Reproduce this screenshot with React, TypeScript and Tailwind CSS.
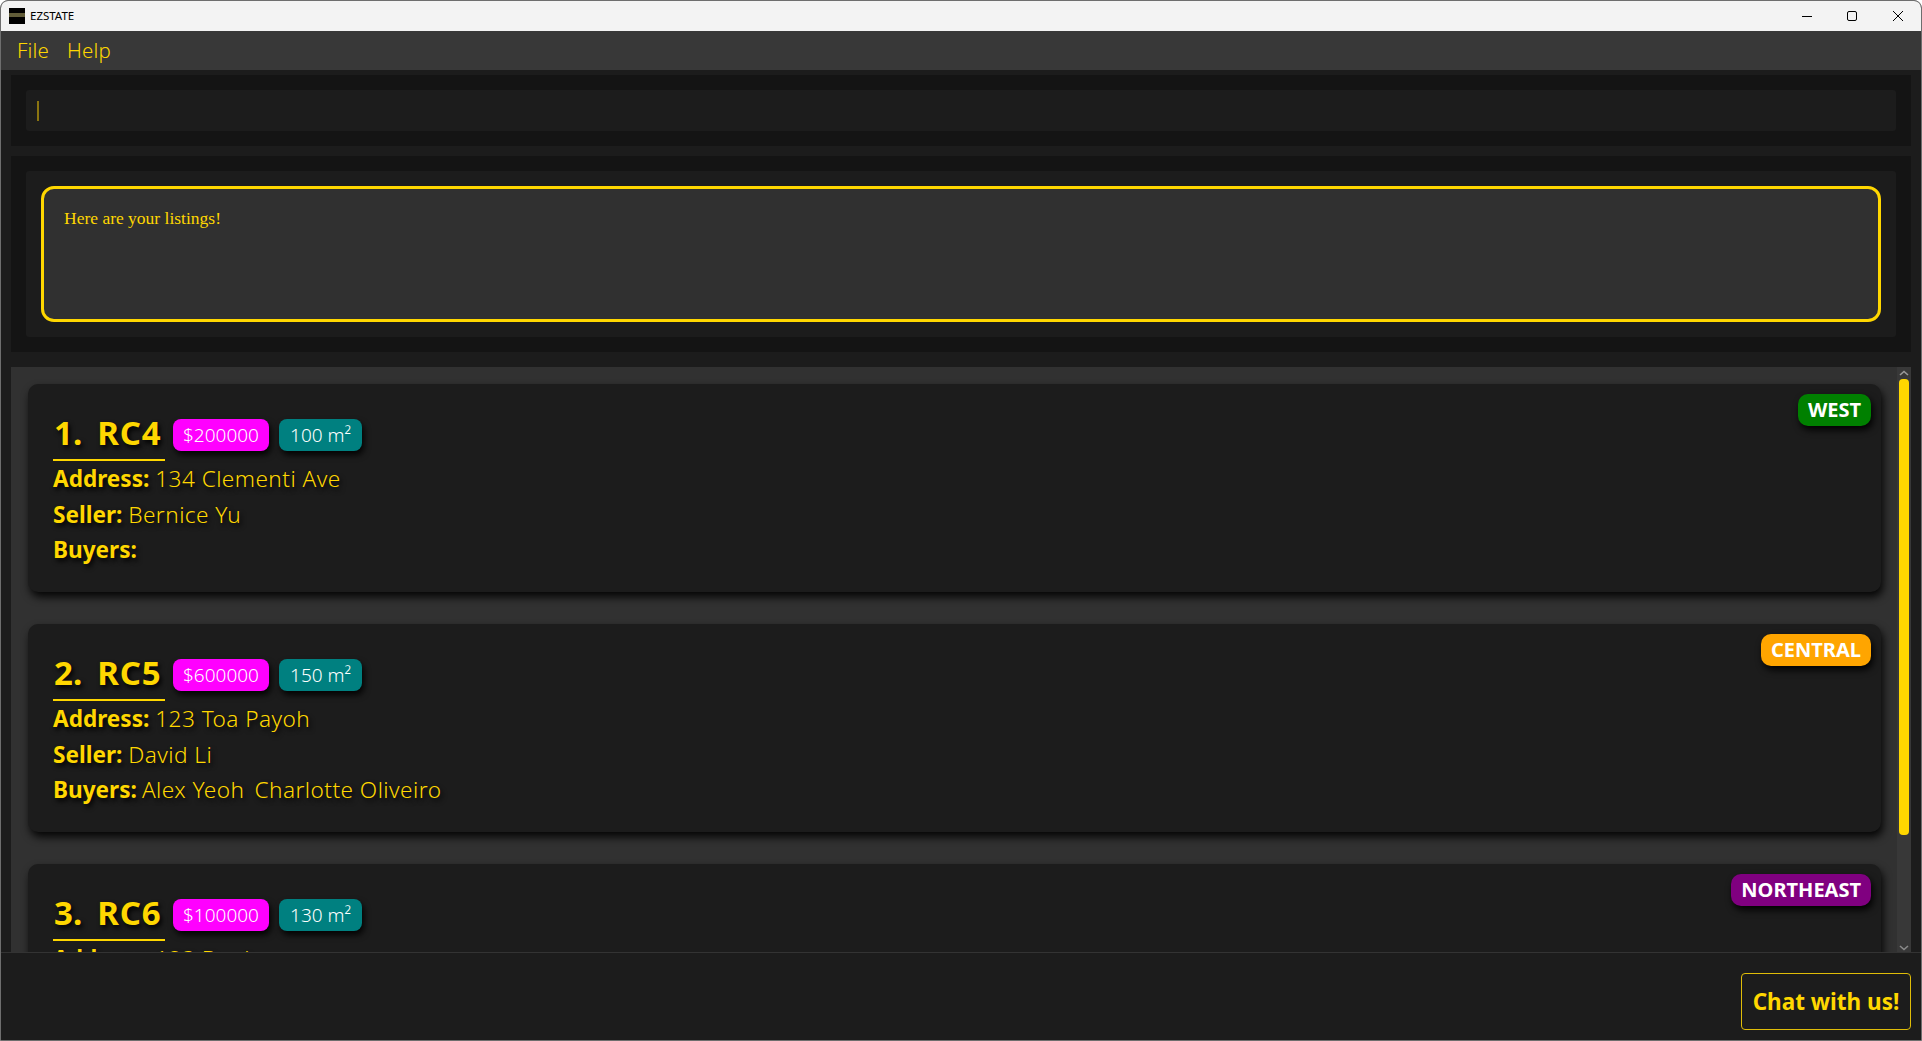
import React from "react";

type Listing = {
    index: number;
    name: string;
    price: string;
    size: string;
    address: string;
    seller: string;
    buyers: string[];
    region: string;
    regionClass: string;
};

const listings: Listing[] = [
    { index: 1, name: "RC4", price: "$200000", size: "100 m²", address: "134 Clementi Ave", seller: "Bernice Yu", buyers: [], region: "WEST", regionClass: "bg-[#008000]" },
    { index: 2, name: "RC5", price: "$600000", size: "150 m²", address: "123 Toa Payoh", seller: "David Li", buyers: ["Alex Yeoh", "Charlotte Oliveiro"], region: "CENTRAL", regionClass: "bg-[#ffa500]" },
    { index: 3, name: "RC6", price: "$100000", size: "130 m²", address: "123 Bugis", seller: "Irfan Ibrahim", buyers: [], region: "NORTHEAST", regionClass: "bg-[#800080]" },
];

const glow = "[text-shadow:2px_3px_5px_#000]";

function TitleBar() {
    return (
        <div className="flex h-[30px] shrink-0 items-center bg-[#f3f3f3] pl-[8px] text-black">
            <svg width="16" height="16" viewBox="0 0 16 16" className="shrink-0">
                <rect width="16" height="16" fill="#000" />
                <rect x="0" y="5" width="16" height="4" fill="#8a8350" />
                <path d="M1 5v4M3 5v4M5 5v4M7 5v4M9 5v4M11 5v4M13 5v4M15 5v4" stroke="#000" strokeWidth="0.6" />
            </svg>
            <span className="ml-[5px] font-['Noto_Sans',sans-serif] text-[11.5px] leading-none">EZSTATE</span>
            <div className="ml-auto flex items-center pr-[18px]">
                <svg width="10" height="10" viewBox="0 0 10 10" className="mr-[35px]">
                    <path d="M0 5.5h10" stroke="#000" strokeWidth="1" />
                </svg>
                <svg width="10" height="10" viewBox="0 0 10 10" className="mr-[36px]">
                    <rect x="0.5" y="0.5" width="9" height="9" rx="1.5" fill="none" stroke="#000" strokeWidth="1" />
                </svg>
                <svg width="10" height="10" viewBox="0 0 10 10">
                    <path d="M0 0l10 10M10 0L0 10" stroke="#000" strokeWidth="1" />
                </svg>
            </div>
        </div>
    );
}

function ListingCard({ item }: { item: Listing }) {
    return (
        <div className="relative h-[208px] shrink-0 rounded-[10px] bg-[#1c1c1c] pl-[25px] pt-[29px] shadow-[2px_5px_9px_rgba(0,0,0,0.9)]">
            <div className="flex items-start">
                <div className="flex h-[48px] w-[112px] gap-[15px] border-b-2 border-[#ffd700] pl-[1px]">
                    <span className={`text-[33px] font-bold leading-[40px] text-[#ffd700] ${glow}`}>{item.index}.</span>
                    <span className={`whitespace-nowrap text-[33px] font-bold leading-[40px] tracking-[0.9px] text-[#ffd700] ${glow}`}>{item.name}</span>
                </div>
                <span className="ml-2 mt-[6px] flex h-[32px] w-[96px] items-center justify-center rounded-[8px] bg-[#ff00ff] text-[19px] font-light text-white shadow-[2px_4px_6px_rgba(0,0,0,0.9)]">
                    {item.price}
                </span>
                <span className="ml-[10px] mt-[6px] flex h-[32px] w-[83px] items-center justify-center rounded-[8px] bg-[#008080] text-[19px] font-light text-white shadow-[2px_4px_6px_rgba(0,0,0,0.9)]">
                    {item.size}
                </span>
            </div>
            <div className={`flex flex-col text-[22.6px] font-light leading-[35.5px] text-[#ffd700] ${glow}`}>
                <p className="whitespace-nowrap">
                    <b className="font-bold">Address:</b> <span className="tracking-[0.45px]">{item.address}</span>
                </p>
                <p className="whitespace-nowrap">
                    <b className="font-bold">Seller:</b> <span className="tracking-[0.45px]">{item.seller}</span>
                </p>
                <p className="flex gap-[10px] whitespace-nowrap">
                    <b className="font-bold">Buyers:</b>
                    {item.buyers.map((b) => (
                        <span key={b} className="-ml-[5px] mr-[5px] tracking-[0.45px]">{b}</span>
                    ))}
                </p>
            </div>
            {/* region badge sits over the card corner */}
            <span className={`absolute right-[10px] top-[10px] flex h-[32px] items-center rounded-[10px] px-[10px] text-[20px] font-bold text-white shadow-[2px_4px_7px_rgba(0,0,0,0.95)] ${item.regionClass}`}>
                {item.region}
            </span>
        </div>
    );
}

function Scrollbar() {
    return (
        <div className="flex w-[14px] shrink-0 flex-col items-center bg-[#383838] pt-[2px]">
            <svg width="12" height="8" viewBox="0 0 12 8" className="shrink-0">
                <path d="M2 6l4-3.5L10 6" fill="none" stroke="#9a9a9a" strokeWidth="1.6" />
            </svg>
            <div className="mt-[2px] h-[456px] w-[10px] rounded-[4px] bg-[#ffd700]" />
            <svg width="12" height="8" viewBox="0 0 12 8" className="mb-0 mt-auto shrink-0">
                <path d="M2 2l4 3.5L10 2" fill="none" stroke="#8a8a8a" strokeWidth="1.6" />
            </svg>
        </div>
    );
}

export default function App() {
    return (
        <div className="relative flex h-[1041px] w-[1922px] flex-col overflow-hidden rounded-t-[8px] border border-[#6e6e6e] bg-[#1c1c1c] font-['Noto_Sans',sans-serif]">
            <TitleBar />

            {/* Menu */}
            <div className="flex h-[39px] shrink-0 items-center gap-[18px] bg-[#383838] pl-[16px] text-[20.5px] font-light tracking-[0.2px] text-[#ffd700]">
                <span>File</span>
                <span>Help</span>
            </div>

            {/* Command box */}
            <div className="mx-[10px] mt-[5px] h-[71px] shrink-0 bg-[#141414] p-[15px]">
                <div className="flex h-[41px] items-center rounded-[3px] bg-[#1c1c1c] pl-[11px]">
                    <div className="h-[20px] w-[2px] bg-[#8a7410]" />
                </div>
            </div>

            {/* Result display */}
            <div className="mx-[10px] mt-[10px] h-[196px] shrink-0 bg-[#141414] p-[15px]">
                <div className="h-[166px] rounded-[3px] bg-[#1c1c1c] px-[15px] py-[15px]">
                    <div className="h-[136px] rounded-[13px] border-[3px] border-[#ffd700] bg-[#303030] pl-[20px] pt-[19px] font-['Liberation_Serif',serif] text-[17.5px] leading-[20px] text-[#ffd700]">
                        Here are your listings!
                    </div>
                </div>
            </div>

            {/* Listing list */}
            <div className="mx-[10px] mt-[15px] flex h-[585px] shrink-0 overflow-hidden bg-[#313131]">
                <div className="flex min-w-0 flex-1 flex-col gap-[32px] overflow-hidden pl-[17px] pr-[16px] pt-[17px]">
                    {listings.map((l) => (
                        <ListingCard key={l.index} item={l} />
                    ))}
                </div>
                <Scrollbar />
            </div>

            {/* Status bar */}
            <div className="flex flex-1 items-start justify-end border-t border-[#333333] bg-[#1c1c1c] pr-[10px] pt-[20px]">
                <button className="flex h-[57px] w-[170px] items-center justify-center rounded-[4px] border border-[#e0bd08] text-[22.5px] font-bold text-[#ffd700]">
                    Chat with us!
                </button>
            </div>
        </div>
    );
}
